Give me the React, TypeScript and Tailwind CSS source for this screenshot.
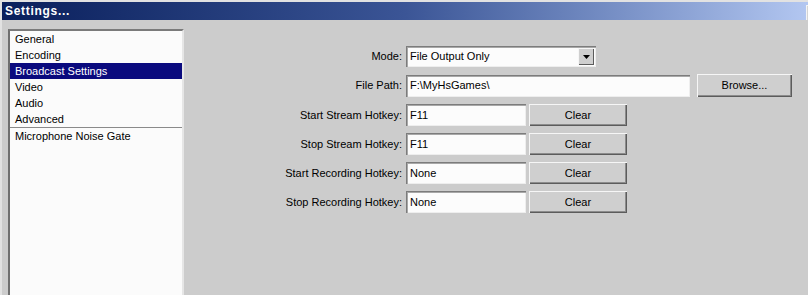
import { ReactNode } from 'react';

const FONT = { fontFamily: '"Liberation Sans", Arial, sans-serif' };

const LIST_ITEMS = ['General', 'Encoding', 'Broadcast Settings', 'Video', 'Audio', 'Advanced'];

const HOTKEYS = [
  { label: 'Start Stream Hotkey:', value: 'F11' },
  { label: 'Stop Stream Hotkey:', value: 'F11' },
  { label: 'Start Recording Hotkey:', value: 'None' },
  { label: 'Stop Recording Hotkey:', value: 'None' },
];

function Button({ children, className }: { children: ReactNode; className: string }) {
  return (
    <div
      className={`flex items-center justify-center bg-[#cfcfcf] text-[11px] text-black shadow-[inset_1px_1px_0_#f6f6f6,inset_-1px_-1px_0_#5c5c5c,inset_-2px_-2px_0_#8c8c8c] ${className}`}
    >
      {children}
    </div>
  );
}

function TextBox({ value, className }: { value: string; className: string }) {
  return (
    <div
      className={`flex items-center bg-[#fcfcfc] pl-[4px] text-[11px] text-black shadow-[inset_1px_1px_0_#7c7c7c,inset_2px_2px_0_#a8a8a8,inset_-1px_-1px_0_#eeeeee] ${className}`}
    >
      {value}
    </div>
  );
}

function Row({ label, children }: { label: string; children: ReactNode }) {
  return (
    <div className="flex items-center">
      <div className="w-[222px] pr-[4px] text-right text-[11px] text-black">{label}</div>
      {children}
    </div>
  );
}

export default function App() {
  return (
    <div
      className="relative h-[295px] w-[808px] overflow-hidden border-l-2 border-t-2 border-[#e2e2e2] bg-[#cccccc]"
      style={FONT}
    >
      {/* Title bar */}
      <div className="flex h-[18px] items-center bg-gradient-to-r from-[#0a1f5c] via-[#3b5596] to-[#b3c7f1] pl-[3px]">
        <span className="text-[12px] font-bold tracking-[0.7px] text-white">Settings...</span>
      </div>
      <div className="absolute left-[804px] top-[3px] h-[15px] w-[2px] border-l border-t border-[#f4f4f4] bg-[#d4d4d4]" />

      <div className="flex">
        {/* Category list */}
        <div className="ml-[6px] mt-[9px] h-[280px] w-[176px] border-l-2 border-r-2 border-t-2 border-l-[#707070] border-r-[#e6e6e6] border-t-[#7a7a7a] bg-[#fbfbfb]">
          {LIST_ITEMS.map(item => (
            <div
              key={item}
              className={`flex h-[16px] items-center pl-[5px] text-[11px] ${
                item === 'Broadcast Settings' ? 'bg-[#0a0a7e] text-white' : 'text-black'
              }`}
            >
              {item}
            </div>
          ))}
          <div className="h-px bg-[#8a8a8a]" />
          <div className="flex h-[16px] items-center pl-[5px] text-[11px] text-black">Microphone Noise Gate</div>
        </div>

        {/* Broadcast settings form */}
        <div className="flex flex-col gap-[7px] pt-[26px]">
          <Row label="Mode:">
            <div className="relative flex h-[21px] w-[190px] items-center bg-[#fcfcfc] pl-[4px] text-[11px] text-black shadow-[inset_1px_1px_0_#7c7c7c,inset_2px_2px_0_#a8a8a8,inset_-1px_-1px_0_#eeeeee]">
              File Output Only
              <div className="absolute right-[2px] top-[2px] flex h-[17px] w-[16px] items-center justify-center bg-[#cfcfcf] shadow-[inset_1px_1px_0_#f6f6f6,inset_-1px_-1px_0_#5c5c5c]">
                <svg width="7" height="4" viewBox="0 0 7 4">
                  <path d="M0 0h7L3.5 4z" fill="#000" />
                </svg>
              </div>
            </div>
          </Row>
          <Row label="File Path:">
            <TextBox value="F:\MyHsGames\" className="h-[22px] w-[284px]" />
            <Button className="ml-[7px] h-[23px] w-[95px]">Browse...</Button>
          </Row>
          {HOTKEYS.map(h => (
            <Row key={h.label} label={h.label}>
              <TextBox value={h.value} className="h-[22px] w-[120px]" />
              <Button className="ml-[3px] h-[22px] w-[98px]">Clear</Button>
            </Row>
          ))}
        </div>
      </div>
    </div>
  );
}
